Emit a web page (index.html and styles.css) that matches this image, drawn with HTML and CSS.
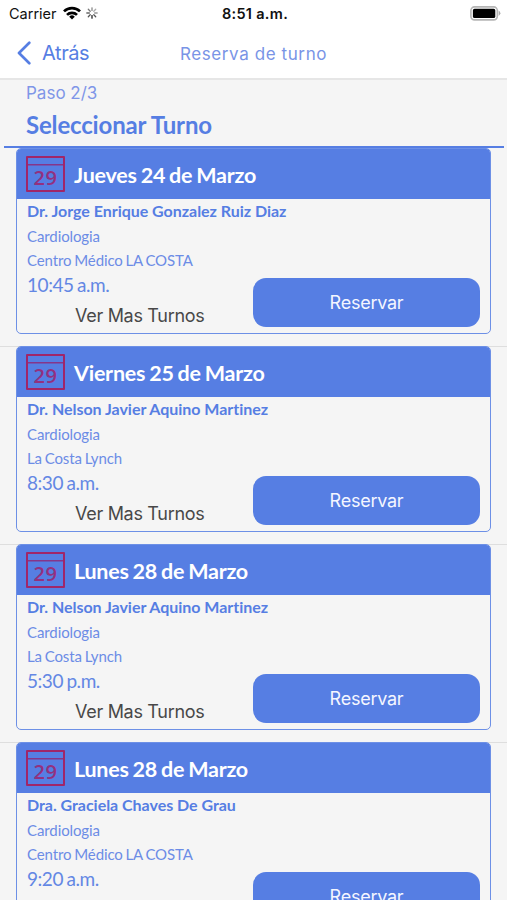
FILE: index.html
```
<!DOCTYPE html>
<html lang="es">
<head>
    <meta charset="UTF-8">
    <meta name="viewport" content="width=device-width, initial-scale=1.0">
    <title>Reserva de turno</title>
    <link rel="stylesheet" href="styles.css">
</head>
<body>

    <!-- Status bar -->
    <div class="status-bar">
        <div class="carrier">
            <span>Carrier</span>
            <svg class="wifi" width="18" height="14" viewBox="0 0 18 14">
                <g fill="none" stroke="#000" stroke-width="2.7">
                    <path d="M1 5.4a11.4 11.4 0 0 1 16 0"/>
                    <path d="M4 8.9a7.1 7.1 0 0 1 10 0"/>
                </g>
                <path d="M9 13.4L6.2 10.7a4 4 0 0 1 5.6 0z"/>
            </svg>
            <svg class="spinner" width="12" height="12" viewBox="-6 -6 12 12" stroke-width="1.3" stroke-linecap="round">
                <path d="M0-2.6V-5.2" stroke="#888"/>
                <path d="M1.8-1.8L3.7-3.7" stroke="#aaa"/>
                <path d="M2.6 0H5.2" stroke="#999"/>
                <path d="M1.8 1.8L3.7 3.7" stroke="#555"/>
                <path d="M0 2.6V5.2" stroke="#222"/>
                <path d="M-1.8 1.8L-3.7 3.7" stroke="#555"/>
                <path d="M-2.6 0H-5.2" stroke="#666"/>
                <path d="M-1.8-1.8L-3.7-3.7" stroke="#777"/>
            </svg>
        </div>
        <div class="clock">8:51 a.m.</div>
        <svg class="battery" width="31" height="15" viewBox="0 0 31 15">
            <rect x="0.9" y="0.9" width="26.4" height="13" rx="3.6" fill="#fff" stroke="#b5b5b5" stroke-width="1.6"/>
            <rect x="2.9" y="2.8" width="22.4" height="9.2" rx="1.6"/>
            <path d="M28.6 4.6q3.6 2.7 0 5.4z" fill="#aaa"/>
        </svg>
    </div>

    <!-- Navigation -->
    <div class="nav-bar">
        <a class="back">
            <svg width="14" height="24" viewBox="0 0 14 24">
                <path d="M12.3 1.7L2 12l10.3 10.3" fill="none" stroke="#567ee3" stroke-width="2.7" stroke-linecap="round" stroke-linejoin="round"/>
            </svg>
            <span>Atrás</span>
        </a>
        <div class="nav-title">Reserva de turno</div>
    </div>

    <div class="intro">
        <div class="step">Paso 2/3</div>
        <h1>Seleccionar Turno</h1>
    </div>

    <!-- Available appointments -->
    <div class="list">
        <div class="item">
            <div class="card">
                <div class="card-header">
                    <div class="calendar">29</div>
                    <h2>Jueves 24 de Marzo</h2>
                </div>
                <div class="card-body">
                    <div class="doctor">Dr. Jorge Enrique Gonzalez Ruiz Diaz</div>
                    <div class="detail">Cardiologia</div>
                    <div class="detail">Centro Médico LA COSTA</div>
                    <div class="actions">
                        <div class="left">
                            <div class="time">10:45 a.m.</div>
                            <a class="more">Ver Mas Turnos</a>
                        </div>
                        <button class="reserve">Reservar</button>
                    </div>
                </div>
            </div>
        </div>
        <div class="item">
            <div class="card">
                <div class="card-header">
                    <div class="calendar">29</div>
                    <h2>Viernes 25 de Marzo</h2>
                </div>
                <div class="card-body">
                    <div class="doctor">Dr. Nelson Javier Aquino Martinez</div>
                    <div class="detail">Cardiologia</div>
                    <div class="detail">La Costa Lynch</div>
                    <div class="actions">
                        <div class="left">
                            <div class="time">8:30 a.m.</div>
                            <a class="more">Ver Mas Turnos</a>
                        </div>
                        <button class="reserve">Reservar</button>
                    </div>
                </div>
            </div>
        </div>
        <div class="item">
            <div class="card">
                <div class="card-header">
                    <div class="calendar">29</div>
                    <h2>Lunes 28 de Marzo</h2>
                </div>
                <div class="card-body">
                    <div class="doctor">Dr. Nelson Javier Aquino Martinez</div>
                    <div class="detail">Cardiologia</div>
                    <div class="detail">La Costa Lynch</div>
                    <div class="actions">
                        <div class="left">
                            <div class="time">5:30 p.m.</div>
                            <a class="more">Ver Mas Turnos</a>
                        </div>
                        <button class="reserve">Reservar</button>
                    </div>
                </div>
            </div>
        </div>
        <div class="item">
            <div class="card">
                <div class="card-header">
                    <div class="calendar">29</div>
                    <h2>Lunes 28 de Marzo</h2>
                </div>
                <div class="card-body">
                    <div class="doctor">Dra. Graciela Chaves De Grau</div>
                    <div class="detail">Cardiologia</div>
                    <div class="detail">Centro Médico LA COSTA</div>
                    <div class="actions">
                        <div class="left">
                            <div class="time">9:20 a.m.</div>
                        </div>
                        <button class="reserve">Reservar</button>
                    </div>
                </div>
            </div>
        </div>
    </div>

</body>
</html>
```
FILE: styles.css
```
* {
    box-sizing: border-box;
}
body {
    margin: 0;
    height: 900px;
    overflow: hidden;
    display: flex;
    flex-direction: column;
    background: #f5f5f5;
    color: #567ee3;
    font-family: Lato, sans-serif;
    font-variant-ligatures: none;
}
h1, h2 {
    margin: 0;
}

/* Status bar */
.status-bar {
    flex: none;
    display: grid;
    grid-template-columns: 1fr auto 1fr;
    align-items: center;
    height: 27px;
    padding: 0 6px 0 9px;
    background: #fff;
    color: #111;
    font: 14.5px Inter, sans-serif;
}
.carrier {
    display: flex;
    align-items: center;
}
.wifi {
    margin-left: 6px;
    margin-top: -2px;
}
.spinner {
    margin-left: 5px;
    margin-top: -1px;
}
.clock {
    font-weight: 600;
    letter-spacing: 0.3px;
}
.battery {
    justify-self: end;
}

/* Navigation */
.nav-bar {
    flex: none;
    display: grid;
    grid-template-columns: 1fr auto 1fr;
    align-items: center;
    height: 53px;
    padding: 0 17px;
    background: #fff;
    border-bottom: 2px solid #e6e6e6;
}
.back {
    display: flex;
    align-items: center;
    gap: 11px;
    font: 20px Inter, sans-serif;
    letter-spacing: -0.4px;
}
.nav-title {
    padding-top: 2px;
    color: #7994e6;
    font: 17px Inter, sans-serif;
    letter-spacing: 0.6px;
}

.intro {
    flex: none;
    height: 68px;
    margin: 0 3px 0 4px;
    padding: 1px 22px 0;
    border-bottom: 2px solid #567ee3;
}
.step {
    color: #7f96e8;
    font: 17px/24px Inter, sans-serif;
}
h1 {
    margin-top: 4px;
    font-size: 24px;
    line-height: 32px;
    letter-spacing: -0.17px;
}

/* Appointment cards */
.list {
    flex: none;
}
.item {
    height: 198px;
    padding: 0 16px;
}
.item + .item {
    border-top: 1px solid #dedede;
}
.card {
    height: 186px;
    border: 1px solid #6d90e6;
    border-radius: 5px;
    overflow: hidden;
}
.item + .item .card {
    margin-top: -1px;
}
.card-header {
    display: flex;
    align-items: center;
    gap: 9px;
    height: 50px;
    padding: 0 9px;
    background: #567ee3;
    color: #fff;
}
.calendar {
    width: 39px;
    height: 36px;
    border: 2px solid #a02669;
    border-radius: 1px;
    background: linear-gradient(#863589, #863589) 0 6px / 100% 1.5px no-repeat;
    color: #93307f;
    font: 600 20px/40px "Open Sans", sans-serif;
    letter-spacing: 0.5px;
    text-align: center;
}
h2 {
    padding-top: 1px;
    font-size: 21.5px;
    line-height: 30px;
    letter-spacing: -0.25px;
    word-spacing: -1px;
}
.card-body {
    padding: 0 10px;
}
.doctor {
    font-size: 16px;
    font-weight: bold;
    line-height: 24.5px;
    letter-spacing: -0.03px;
}
.detail {
    color: #6c8ce6;
    font-size: 15px;
    line-height: 24.5px;
    letter-spacing: -0.1px;
    word-spacing: -1px;
}
.actions {
    display: flex;
    justify-content: space-between;
    align-items: flex-start;
}
.left {
    display: flex;
    flex-direction: column;
}
.time {
    color: #6387e4;
    font-size: 19px;
    line-height: 24.5px;
    letter-spacing: -0.45px;
    word-spacing: -1px;
}
.more {
    margin: 6px 0 0 48px;
    color: #484848;
    font: 18px/26px Inter, sans-serif;
    letter-spacing: -0.3px;
}
.reserve {
    width: 227px;
    height: 49px;
    margin-top: 5.5px;
    border: 0;
    border-radius: 13px;
    background: #567ee3;
    color: #f4f6ff;
    font: 18px Inter, sans-serif;
    letter-spacing: -0.25px;
}
```
